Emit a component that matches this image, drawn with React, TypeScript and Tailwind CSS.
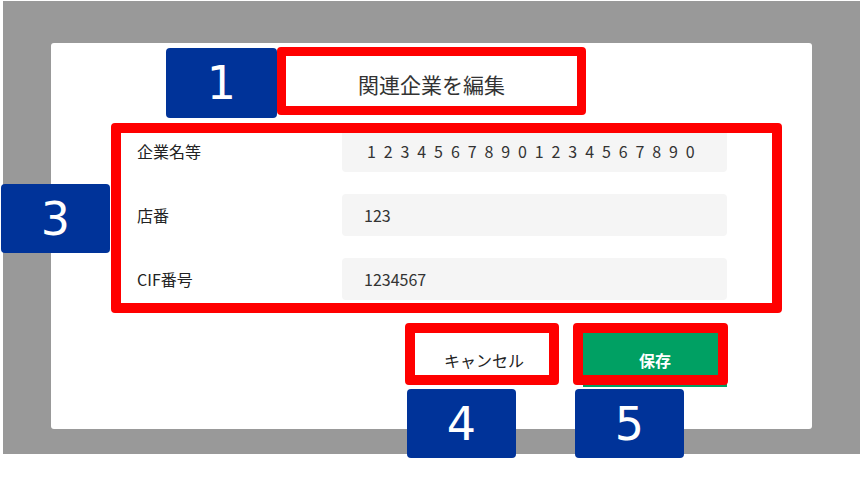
import React from 'react';

const jp = { fontFamily: '"Noto Sans CJK JP", "Noto Sans", sans-serif' };

interface Field {
  label: string;
  value: string;
  spaced?: boolean;
}

const fields: Field[] = [
  { label: '企業名等', value: '12345678901234567890', spaced: true },
  { label: '店番', value: '123' },
  { label: 'CIF番号', value: '1234567' },
];

// numbered callout that sits over the screenshot
function Badge({ n, className }: { n: string; className: string }) {
  return (
    <div
      className={`absolute flex items-center justify-center rounded-[4px] bg-[#003399] text-[46px] leading-none text-white ${className}`}
      style={{ fontFamily: '"DejaVu Sans", sans-serif' }}
    >
      {n}
    </div>
  );
}

export default function App() {
  return (
    <div className="relative h-[486px] w-[862px] overflow-hidden bg-white" style={jp}>
      {/* backdrop */}
      <div className="ml-[3px] mt-[1px] h-[453px] w-[857px] bg-[#999999] pl-[48px] pt-[42px]">
        {/* dialog */}
        <div className="flex h-[386px] w-[761px] flex-col rounded-[3px] bg-white px-[85px] pb-[42px]">
          <div className="flex h-[87px] items-center justify-center pb-[4px] text-[21px] text-[#333333]">
            関連企業を編集
          </div>

          <div className="flex flex-col gap-[22px]">
            {fields.map((f) => (
              <div key={f.label} className="flex h-[42px] items-center">
                <div className="w-[206px] pl-[1px] text-[16px] text-[#222222]">{f.label}</div>
                <div
                  className={`flex h-[42px] flex-1 items-center rounded-[4px] bg-[#f5f5f5] text-[16px] text-[#333333] ${
                    f.spaced ? 'pl-[25px] tracking-[7.9px]' : 'pl-[22px]'
                  }`}
                >
                  {f.value}
                </div>
              </div>
            ))}
          </div>

          <div className="mt-[33px] flex justify-end gap-[27px]">
            <button className="flex h-[54px] w-[144px] items-center justify-center bg-white text-[16px] text-[#222222]">
              キャンセル
            </button>
            <button className="flex h-[54px] w-[144px] items-center justify-center bg-[#00a063] text-[16px] font-bold text-white">
              保存
            </button>
          </div>
        </div>
      </div>

      {/* annotation frames */}
      <div className="absolute left-[277px] top-[47px] h-[68px] w-[309px] rounded-[4px] border-[9px] border-[#ff0000]" />
      <div className="absolute left-[111px] top-[123px] h-[190px] w-[671px] rounded-[4px] border-[10px] border-[#ff0000]" />
      <div className="absolute left-[405px] top-[323px] h-[62px] w-[154px] rounded-[4px] border-[10px] border-[#ff0000]" />
      <div className="absolute left-[573px] top-[323px] h-[62px] w-[155px] rounded-[4px] border-[10px] border-[#ff0000]" />

      <Badge n="1" className="left-[166px] top-[48px] h-[70px] w-[111px]" />
      <Badge n="3" className="left-[1px] top-[184px] h-[69px] w-[109px]" />
      <Badge n="4" className="left-[407px] top-[389px] h-[69px] w-[109px]" />
      <Badge n="5" className="left-[575px] top-[389px] h-[69px] w-[109px]" />
    </div>
  );
}
